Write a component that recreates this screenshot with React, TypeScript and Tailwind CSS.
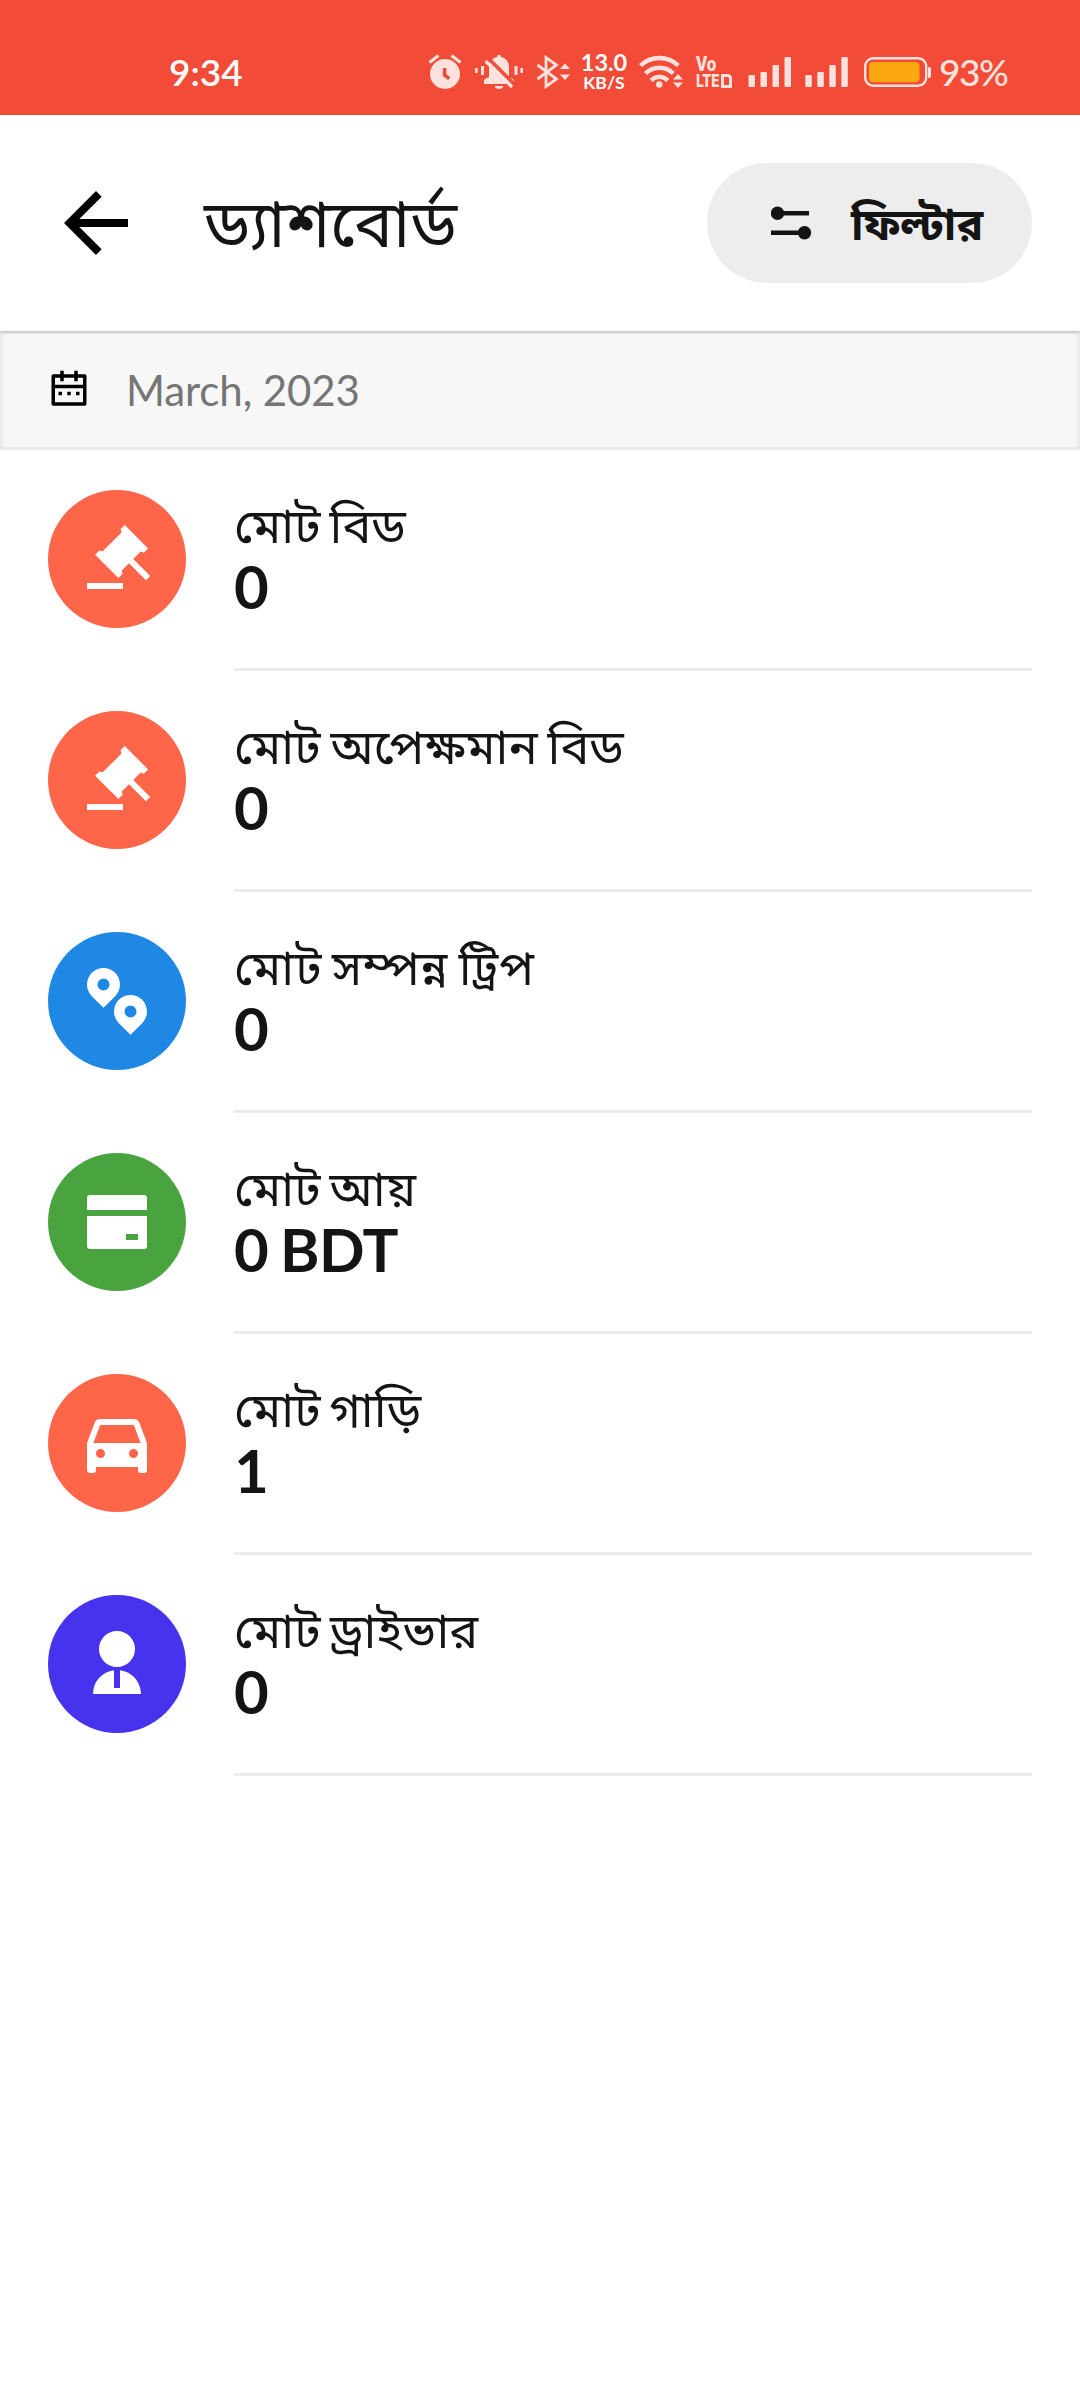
import type { ReactNode } from "react";

const PATHS = {
  auction:
    "M14 20v2H2v-2h12zM14.586.686l7.778 7.778L20.95 9.88l-1.06-.354L17.413 12l5.657 5.657-1.414 1.414L16 13.414l-2.404 2.404.283 1.132-1.415 1.414-7.778-7.778 1.415-1.414 1.13.282 6.294-6.293-.353-1.06L14.586.686z",
  pins: "M11.39 10.39L7.5 14.277 3.61 10.39a5.5 5.5 0 1 1 7.78 0zM7.5 8.5a2 2 0 1 0 0-4 2 2 0 0 0 0 4zm12.89 10.89l-3.89 3.888-3.89-3.889a5.5 5.5 0 1 1 7.78 0zM16.5 17.5a2 2 0 1 0 0-4 2 2 0 0 0 0 4z",
  card: "M22 10v10a1 1 0 0 1-1 1H3a1 1 0 0 1-1-1V10h20zm0-2H2V4a1 1 0 0 1 1-1h18a1 1 0 0 1 1 1v4zm-7 8v2h4v-2h-4z",
  car: "M19 20H5v1a1 1 0 0 1-1 1H3a1 1 0 0 1-1-1v-9l2.513-6.702A2 2 0 0 1 6.386 4h11.228a2 2 0 0 1 1.873 1.298L22 12v9a1 1 0 0 1-1 1h-1a1 1 0 0 1-1-1v-1zM4.136 12h15.728l-2.25-6H6.386l-2.25 6zM6.5 17a1.5 1.5 0 1 0 0-3 1.5 1.5 0 0 0 0 3zm11 0a1.5 1.5 0 1 0 0-3 1.5 1.5 0 0 0 0 3z",
  user: "M11 14.062V20h2v-5.938c3.946.492 7 3.858 7 7.938H4a8.001 8.001 0 0 1 7-7.938zM12 13c-3.315 0-6-2.685-6-6s2.685-6 6-6 6 2.685 6 6-2.685 6-6 6z",
  calendar:
    "M17 3h4a1 1 0 0 1 1 1v16a1 1 0 0 1-1 1H3a1 1 0 0 1-1-1V4a1 1 0 0 1 1-1h4V1h2v2h6V1h2v2zm-2 2H9v2H7V5H4v4h16V5h-3v2h-2V5zm5 6H4v8h16v-8zM6 13h2v2H6v-2zm5 0h2v2h-2v-2zm5 0h2v2h-2v-2z",
  back: "M20 11H7.83l5.59-5.59L12 4l-8 8 8 8 1.41-1.41L7.83 13H20v-2z",
};

function Icon({ d, className }: { d: string; className: string }) {
  return (
    <svg viewBox="0 0 24 24" fill="currentColor" fillRule="evenodd" className={className}>
      <path d={d} />
    </svg>
  );
}

/* Status bar glyph: a 40px tall strip starting at the given x. */
function Glyph({ x, w, className = "", children }: { x: number; w: number; className?: string; children: ReactNode }) {
  return (
    <svg width={w} height={40} viewBox={`${x} 52 ${w} 40`} fill="#ffe1dd" className={`shrink-0 ${className}`}>
      {children}
    </svg>
  );
}

function Signal({ x }: { x: number }) {
  return (
    <>
      <rect x={x} y="75" width="6.5" height="12" rx="1" />
      <rect x={x + 12} y="72" width="6.5" height="15" rx="1" />
      <rect x={x + 24} y="65" width="6.5" height="22" rx="1" />
      <rect x={x + 36} y="57" width="6.5" height="30" rx="1" />
    </>
  );
}

function StatusBar() {
  return (
    <div className="flex h-[115px] items-start bg-[#f24b37] pt-[52px] text-[#ffe1dd]">
      <span className="ml-[169px] w-[79px] text-[37px] leading-[40px] font-semibold text-white">9:34</span>
      <Glyph x={428} w={34} className="ml-[180px]">
        <circle cx="445" cy="74" r="15" />
        <path d="M429.5 62.5l9-7M460.5 62.5l-9-7" stroke="#ffe1dd" strokeWidth="3" />
        <path d="M444.6 68v7l4.6 3.6" stroke="#f24b37" strokeWidth="3.6" fill="none" />
      </Glyph>
      <Glyph x={474} w={50} className="ml-3">
        <path d="M475 68h2.6v5H475zM481 66h3v9h-3zM514.500 66h3v9h-3zM520.400 68h2.600v5h-2.600z" />
        <path d="M484 84v-3c0-1.500 1-2.200 5-4V67c0-5 3-8.800 8-10 0-3 4-3 4 0 5 1.200 8 5 8 10v10c4 1.800 5 2.500 5 4v3zM494.500 86h9c-1 4-8 4-9 0z" />
        <path d="M488.500 58.500l28 28" stroke="#f24b37" strokeWidth="3.500" />
        <path d="M485.500 61l26.500 26" stroke="#ffe1dd" strokeWidth="3.200" />
      </Glyph>
      <Glyph x={536} w={35} className="ml-3">
        <path d="M537.500 65l19 14-10.500 7.500V57.500L556.500 65l-19 14" fill="none" stroke="#ffe1dd" strokeWidth="2.800" />
        <path d="M560 69l5-5.500 5 5.500zM560 74.500h10l-5 5.500z" />
      </Glyph>
      <div className="ml-[9px] flex w-[48px] flex-col items-center text-white">
        <span className="text-[23.5px] leading-[21px] font-bold">13.0</span>
        <span className="text-[17.5px] leading-[19px] font-bold">KB/S</span>
      </div>
      <Glyph x={638} w={46} className="ml-[10px]">
        <g fill="none" stroke="#ffe1dd" strokeWidth="4.400">
          <path d="M640.500 65.500a27.500 27.500 0 0 1 37.800 0" />
          <path d="M645.500 73.500a19.500 19.500 0 0 1 27.800 0" />
          <path d="M651 80.500a11.500 11.500 0 0 1 16.800 0" />
        </g>
        <circle cx="659.300" cy="84.500" r="3.200" />
        <path d="M669 82l9-11 9 11-9 10z" fill="#f24b37" />
        <path d="M673 79.500l5-5.500 5 5.500zM673 82.500h10l-5 5.500z" />
      </Glyph>
      <div className="mt-[4px] ml-[12px] flex w-[37px] flex-col font-['Roboto'] font-black">
        <span className="origin-left scale-x-85 text-[20px] leading-[16px]">Vo</span>
        <span className="flex items-center">
          <span className="w-[25px] origin-left scale-x-75 text-[19px] leading-[18px]">LTE</span>
          <svg width="11" height="14" viewBox="0 0 11 14" fill="none" stroke="currentColor" strokeWidth="3" className="shrink-0">
            <path d="M1.500 1.500H6.500q3 0 3 3v8h-8z" />
          </svg>
        </span>
      </div>
      <Glyph x={748} w={44} className="ml-[15px]">
        <Signal x={748.5} />
      </Glyph>
      <Glyph x={804} w={46} className="ml-3">
        <Signal x={805.3} />
      </Glyph>
      <Glyph x={863} w={70} className="ml-[13px]">
        <rect x="865.200" y="58.200" width="61" height="27.600" rx="8" fill="none" stroke="#ffe1dd" strokeWidth="2.400" />
        <rect x="869" y="62" width="50.500" height="20.300" rx="4" fill="#fda813" />
        <path d="M928 67h1q2 0 2 2v7q0 2-2 2h-1z" />
      </Glyph>
      <span className="ml-[6px] text-[37px] leading-[40px] font-medium tracking-[-1.5px]">93%</span>
    </div>
  );
}

function Header() {
  return (
    <header className="relative z-10 flex h-[216px] items-center bg-white px-12 shadow-[0_1px_3px_rgba(0,0,0,0.22)]">
      <Icon d={PATHS.back} className="size-24 text-black" />
      <h1 className="mb-[2px] ml-[60px] text-[65.500px] leading-[80px]">ড্যাশবোর্ড</h1>
      <button className="ml-auto flex h-[120px] w-[325px] items-center rounded-full bg-[#ededed] pl-16">
        <svg width="42" height="36" viewBox="771 205 42 36" fill="currentColor">
          <circle cx="777.500" cy="213.200" r="6.700" />
          <circle cx="804.500" cy="232.700" r="6.700" />
          <path d="M777 211h32v4.400h-32zM771 230.600h32v4.400h-32z" />
        </svg>
        <span className="ml-[38px] text-[44.5px] leading-[60px] font-bold">ফিল্টার</span>
      </button>
    </header>
  );
}

const ROWS = [
  { label: "মোট বিড", value: "0", icon: PATHS.auction, color: "bg-[#ff6548]", spacing: "[word-spacing:-3.5px]" },
  { label: "মোট অপেক্ষমান বিড", value: "0", icon: PATHS.auction, color: "bg-[#ff6548]", spacing: "[word-spacing:-2.5px]" },
  { label: "মোট সম্পন্ন ট্রিপ", value: "0", icon: PATHS.pins, color: "bg-[#1f88e5]", spacing: "tracking-[0.8px] [word-spacing:-3.5px]" },
  { label: "মোট আয়", value: "0 BDT", icon: PATHS.card, color: "bg-[#49a440]", spacing: "[word-spacing:-3.5px]" },
  { label: "মোট গাড়ি", value: "1", icon: PATHS.car, color: "bg-[#ff6548]", spacing: "[word-spacing:-3.5px]" },
  { label: "মোট ড্রাইভার", value: "0", icon: PATHS.user, color: "bg-[#4733ee]", spacing: "[word-spacing:-3px]" },
];

export default function App() {
  return (
    <div className="h-[2400px] w-[1080px] overflow-hidden bg-white font-['Lato','Noto_Sans_Bengali','Noto_Sans',sans-serif] text-[#141414]">
      <StatusBar />
      <Header />
      <div className="flex h-[119px] items-center border-[3px] border-[#e9eaeb] bg-[#f7f7f7] pl-[45px]">
        <Icon d={PATHS.calendar} className="mb-[1px] size-[42px] text-black" />
        <span className="mb-[2px] ml-[36px] text-[42px] leading-[50px] tracking-[-0.1px] text-[#757575]">March, 2023</span>
      </div>
      <ul>
        {ROWS.map((row) => (
          <li key={row.label} className="flex h-[221px] pr-12 pl-12">
            <div className={`mt-10 flex size-[138px] shrink-0 items-center justify-center rounded-full text-white ${row.color}`}>
              <Icon d={row.icon} className="size-[72px]" />
            </div>
            <div className="ml-12 flex h-[221px] flex-1 flex-col border-b-[3px] border-[#ebebeb] pt-[43px]">
              <span className={`mb-px text-[48.5px] leading-[62px] ${row.spacing}`}>{row.label}</span>
              <span className="text-[60px] leading-[60px] font-bold tracking-[-0.5px] [word-spacing:-2.5px]">{row.value}</span>
            </div>
          </li>
        ))}
      </ul>
    </div>
  );
}
